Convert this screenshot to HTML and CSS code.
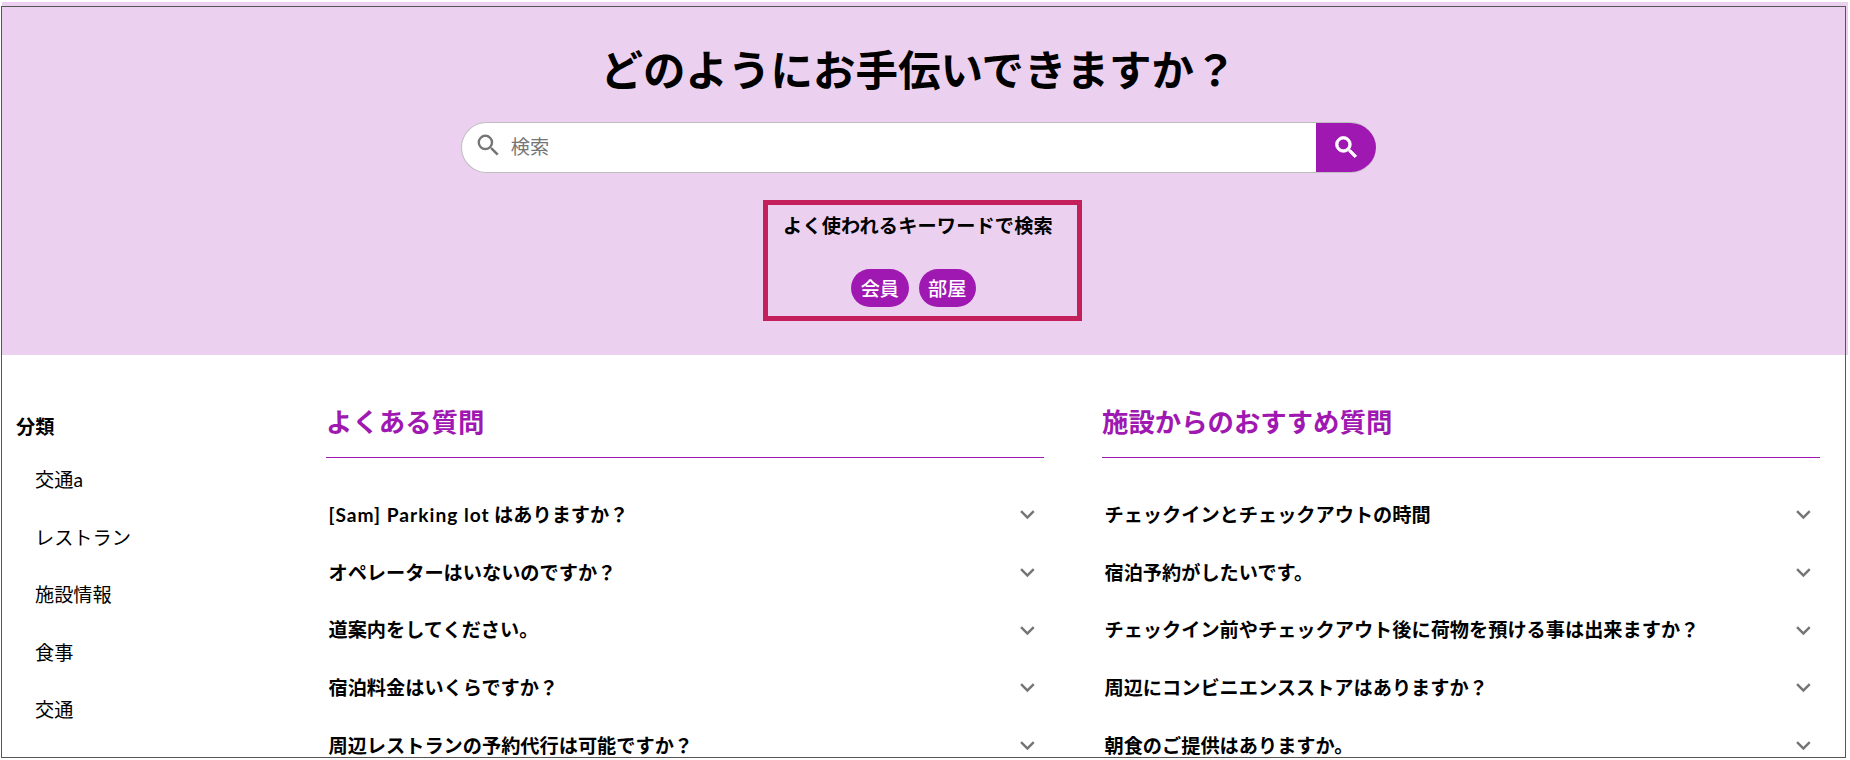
FILE: index.html
```
<!DOCTYPE html>
<html lang="ja">
<head>
    <meta charset="UTF-8">
    <title>よくある質問</title>
    <link rel="stylesheet" href="styles.css">
</head>
<body>
<svg class="sprite">
    <symbol id="search" viewBox="0 0 24 24">
        <path d="M15.5 14h-.79l-.28-.27A6.471 6.471 0 0 0 16 9.5 6.5 6.5 0 1 0 9.5 16c1.61 0 3.09-.59 4.23-1.57l.27.28v.79l5 4.99L20.49 19l-4.99-5zm-6 0C7.01 14 5 11.99 5 9.5S7.01 5 9.5 5 14 7.01 14 9.5 11.99 14 9.5 14z"/>
    </symbol>
    <symbol id="more" viewBox="0 0 24 24">
        <path d="M16.59 8.59L12 13.17 7.41 8.59 6 10l6 6 6-6z"/>
    </symbol>
</svg>
<div class="page">
    <header class="hero">
        <h1>どのようにお手伝いできますか？</h1>
        <form class="search" onsubmit="return false">
            <svg class="search-icon"><use href="#search"/></svg>
            <input type="text" placeholder="検索">
            <button class="search-btn" aria-label="検索"><svg><use href="#search"/></svg></button>
        </form>
        <div class="keywords">
            <h3>よく使われるキーワードで検索</h3>
            <div class="chips">
                <a href="javascript:;">会員</a>
                <a href="javascript:;">部屋</a>
            </div>
        </div>
    </header>

    <main class="content">
        <nav class="category">
            <h3>分類</h3>
            <ul>
                <li>交通<span class="latin">a</span></li>
                <li>レストラン</li>
                <li>施設情報</li>
                <li>食事</li>
                <li>交通</li>
            </ul>
        </nav>
        <section class="faq">
            <h2>よくある質問</h2>
            <ul>
                <li><span><span class="latin">[Sam] Parking lot</span> はありますか？</span><svg><use href="#more"/></svg></li>
                <li><span>オペレーターはいないのですか？</span><svg><use href="#more"/></svg></li>
                <li><span>道案内をしてください。</span><svg><use href="#more"/></svg></li>
                <li><span>宿泊料金はいくらですか？</span><svg><use href="#more"/></svg></li>
                <li><span>周辺レストランの予約代行は可能ですか？</span><svg><use href="#more"/></svg></li>
            </ul>
        </section>
        <section class="faq">
            <h2>施設からのおすすめ質問</h2>
            <ul>
                <li><span>チェックインとチェックアウトの時間</span><svg><use href="#more"/></svg></li>
                <li><span>宿泊予約がしたいです。</span><svg><use href="#more"/></svg></li>
                <li><span>チェックイン前やチェックアウト後に荷物を預ける事は出来ますか？</span><svg><use href="#more"/></svg></li>
                <li><span>周辺にコンビニエンスストアはありますか？</span><svg><use href="#more"/></svg></li>
                <li><span>朝食のご提供はありますか。</span><svg><use href="#more"/></svg></li>
            </ul>
        </section>
    </main>
    <div class="frame"></div>
</div>
</body>
</html>
```

FILE: styles.css
```
*{
    margin: 0;
    padding: 0;
    box-sizing: border-box;
}

body{
    font-family: "Noto Sans CJK JP", sans-serif;
    font-size: 19.2px;
    color: #000;
    background-color: #fff;
    overflow: hidden;
}

ul{
    list-style: none;
}

.sprite{
    display: none;
}

.page{
    position: relative;
    height: 760px;
    padding: 2px 2px 0 2px;
    overflow: hidden;
}

/* 外枠 */
.frame{
    position: absolute;
    top: 6px;
    left: 1px;
    width: 1845px;
    height: 752px;
    border: 1px solid #555;
    pointer-events: none;
}

.hero{
    height: 353px;
    padding-top: 35px;
    background-color: #ebd1ef;

    display: flex;
    flex-direction: column;
    align-items: center;
}

.hero h1{
    font-size: 42.5px;
    line-height: 62px;
    margin-right: 13px;
}

.search{
    display: flex;
    align-items: center;
    width: 915px;
    height: 51px;
    margin-top: 23px;
    margin-right: 13px;
    padding-left: 12px;
    border: 1px solid #bdbdbd;
    border-right: none;
    border-radius: 26px;
    background-color: #fff;
    overflow: hidden;
}

.search svg{
    width: 28.8px;
    height: 28.8px;
}

.search-icon{
    fill: #757575;
    margin-bottom: 4px;
}

.search input{
    flex: 1;
    margin-left: 8px;
    padding-bottom: 4px;
    border: none;
    outline: none;
    font: inherit;
}

.search input::placeholder{
    color: #757575;
}

.search-btn{
    display: flex;
    align-items: center;
    justify-content: center;
    width: 60px;
    height: 51px;
    border: none;
    background-color: #9f18b1;
}

.search-btn svg{
    fill: #fff;
    stroke: #fff;
    stroke-width: 0.8px;
}

.keywords{
    width: 319px;
    height: 121px;
    margin-top: 27px;
    margin-right: 5px;
    padding: 6px 18px 0 0;
    border: 5px solid #c21f5b;
    text-align: center;
}

.keywords h3{
    padding-left: 9px;
    font-size: 19.2px;
    line-height: 28px;
    letter-spacing: 0.15px;
    white-space: nowrap;
}

.chips{
    display: flex;
    justify-content: center;
    gap: 10px;
    margin-top: 30px;
}

.chips a{
    padding: 0 9.5px;
    border-radius: 19px;
    line-height: 38px;
    font-weight: 500;
    color: #fff;
    background-color: #9f18b1;
    text-decoration: none;
}

.content{
    display: grid;
    grid-template-columns: 252px 718px 718px;
    column-gap: 58px;
    padding-left: 14px;
}

.category h3{
    margin-top: 57px;
    font-size: 19.2px;
    line-height: 28px;
}

.category ul{
    margin-top: 11px;
    padding-left: 19px;
}

.category li{
    height: 57.6px;
    line-height: 57.6px;
}

.faq h2{
    height: 103px;
    padding-top: 46px;
    border-bottom: 1px solid #9f18b1;
    font-size: 26.4px;
    line-height: 39px;
    color: #9f18b1;
}

.faq ul{
    margin-top: 28px;
    padding: 0 2px 0 2.5px;
}

.faq li{
    display: flex;
    align-items: center;
    justify-content: space-between;
    height: 57.6px;
    font-weight: 700;
}

.faq li > span{
    padding-bottom: 1px;
}

.faq svg{
    width: 28.8px;
    height: 28.8px;
    fill: #757575;
}

.latin{
    font-family: Lato, "Noto Sans CJK JP", sans-serif;
    letter-spacing: 1px;
}
```
